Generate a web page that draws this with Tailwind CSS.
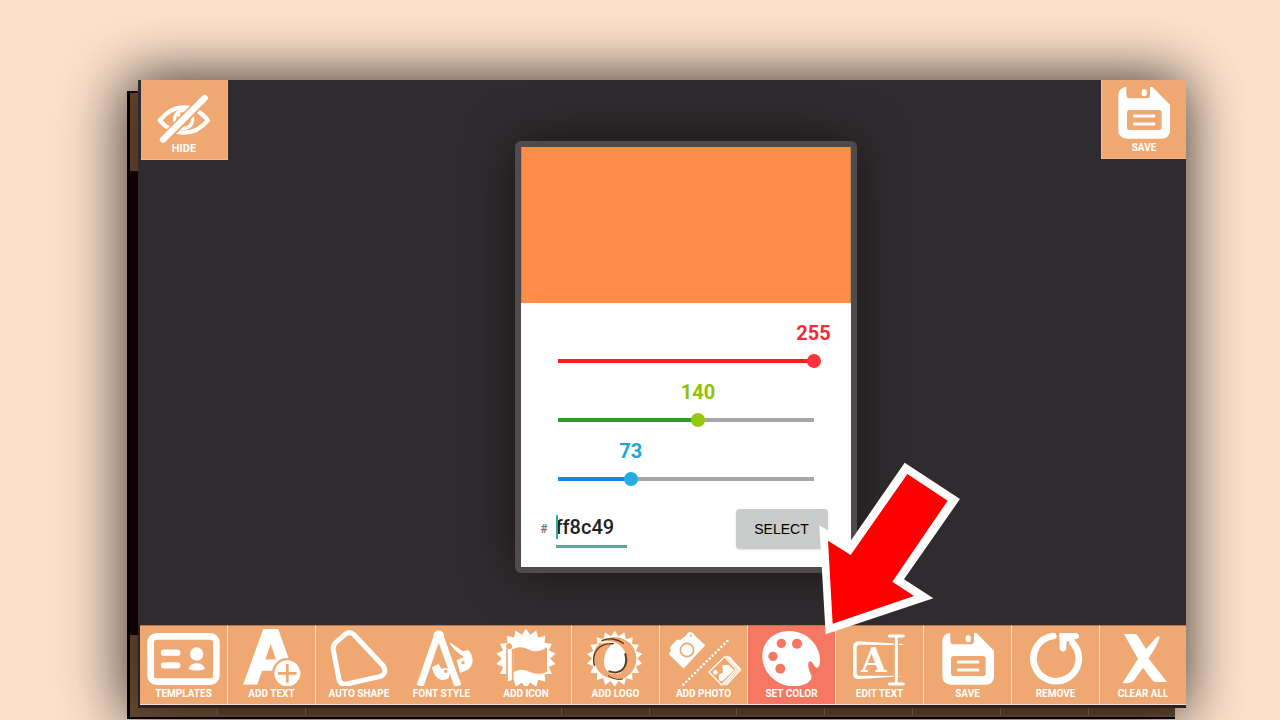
<!DOCTYPE html>
<html lang="en">
<head>
  <meta charset="UTF-8">
  <meta name="viewport" content="width=device-width, initial-scale=1.0">
  <title>Logo Editor</title>
  <script src="https://cdn.jsdelivr.net/npm/@tailwindcss/browser@4"></script>
</head>
<body class="h-screen overflow-hidden bg-[#fde1cc] pt-20 pb-3 pl-[138px] pr-[94px] font-['Roboto',sans-serif]">

  <!-- Shared shapes -->
  <svg class="absolute size-0">
    <symbol id="floppy" viewBox="282 48 264 180">
      <path fill="white" d="M361 68V92Q361 103 372 103H422Q432 103 432 92V68L440 70L492 122V200Q490 224 466 224H362Q337 222 337 198V94Q337 72 361 68Z"/>
      <rect fill="white" x="407" y="76" width="15" height="21" rx="6"/>
      <rect fill="#efa872" x="363" y="138" width="104" height="60" rx="8"/>
      <path stroke="white" stroke-width="9" stroke-linecap="round" d="M385 156H444M385 180H444"/>
    </symbol>
    <symbol id="burst" viewBox="-90 -90 180 180">
      <g fill="white">
        <circle r="72"/>
        <g id="six">
          <g id="three">
            <path id="ray" d="M-15-68L0-90L15-68Z"/>
            <use href="#ray" transform="rotate(20)"/>
            <use href="#ray" transform="rotate(40)"/>
          </g>
          <use href="#three" transform="rotate(60)"/>
        </g>
        <use href="#six" transform="rotate(120)"/>
        <use href="#six" transform="rotate(240)"/>
      </g>
    </symbol>
  </svg>

  <div class="relative h-full">

    <!-- Window behind -->
    <div class="absolute top-[11px] -left-[11px] flex h-full w-full flex-col justify-between border-l-3 border-black bg-[#170304] shadow-[-2px_-4px_60px_6px_rgba(0,0,0,0.5)]">
      <div class="mt-0.5 h-[78px] w-[87px] bg-[#6b4a30]"></div>
      <div class="mb-0.5 grid h-[82px] grid-cols-[88fr_88fr_86fr_79fr_91fr_repeat(6,88fr)_86fr] border-b-2 border-[#55504c] bg-[#5f4029]">
        <span class="border-r border-[#70665d] bg-[#6b4a30]"></span>
        <span class="border-r border-[#70665d]"></span>
        <span></span>
        <span></span>
        <span class="border-r border-[#70665d]"></span>
        <span class="border-r border-[#70665d]"></span>
        <span class="border-r border-[#70665d]"></span>
        <span class="border-r border-[#70665d]"></span>
        <span class="border-r border-[#70665d]"></span>
        <span class="border-r border-[#70665d]"></span>
        <span class="border-r border-[#70665d]"></span>
        <span></span>
      </div>
    </div>

    <!-- Editor window -->
    <div class="relative flex h-full flex-col bg-[#302b2e] text-[10px] font-bold text-white shadow-[0_0_50px_rgba(0,0,0,0.45)]">
      <div class="flex min-h-0 flex-1 items-start">
        <button class="ml-[3px] flex h-20 w-[87px] shrink-0 flex-col items-center border-r border-b border-[#f7b884] bg-[#efa872]">
          <svg class="h-[60px] w-22 shrink-0 overflow-visible" viewBox="91 60 264 180" fill="none">
            <path stroke="white" stroke-width="13" stroke-linejoin="round" d="M150 181Q182 142 222 142Q264 142 295 181Q264 218 222 218Q182 218 150 181Z"/>
            <circle stroke="white" stroke-width="10" cx="222" cy="178" r="27"/>
            <path stroke="white" stroke-width="9" d="M206 160Q208 174 222 172"/>
            <path stroke="#efa872" stroke-width="30" d="M164 236L282 118"/>
            <path stroke="white" stroke-width="19" stroke-linecap="round" d="M160 239L285 114"/>
          </svg>
          <span class="text-[11px] leading-[18px]">HIDE</span>
        </button>

        <main class="flex flex-1 justify-center pt-[61px] pl-[42px]">
          <!-- Color picker -->
          <form class="relative w-[342px] rounded-md border-6 border-[#504a4e] bg-white shadow-[0_0_50px_rgba(0,0,0,0.5)]">
            <div class="h-[156px] border-x border-[#c08a48] bg-[#ff8c49]"></div>
            <div class="flex flex-col gap-3 px-[30px] pt-[18px] text-xl">
              <div class="flex flex-col gap-[9px]">
                <div class="mx-[7px] leading-6">
                  <label for="red" class="block w-10 text-center text-[#f52c35]" style="margin-left: calc(100% - 20px)">255</label>
                </div>
                <input id="red" type="range" min="0" max="255" value="255" class="h-3.5 w-full appearance-none bg-linear-to-r from-[#f5201f] from-100% to-[#a6a6a6] to-100% bg-size-[calc(100%-14px)_4px] bg-center bg-no-repeat [&::-webkit-slider-thumb]:size-3.5 [&::-webkit-slider-thumb]:appearance-none [&::-webkit-slider-thumb]:rounded-full [&::-webkit-slider-thumb]:bg-[#fb353b]">
              </div>
              <div class="flex flex-col gap-[9px]">
                <div class="mx-[7px] leading-6">
                  <label for="green" class="block w-10 text-center text-[#8ec400]" style="margin-left: calc(54.9% - 20px)">140</label>
                </div>
                <input id="green" type="range" min="0" max="255" value="140" class="h-3.5 w-full appearance-none bg-linear-to-r from-[#2c9a2c] from-55% to-[#a6a6a6] to-55% bg-size-[calc(100%-14px)_4px] bg-center bg-no-repeat [&::-webkit-slider-thumb]:size-3.5 [&::-webkit-slider-thumb]:appearance-none [&::-webkit-slider-thumb]:rounded-full [&::-webkit-slider-thumb]:bg-[#93c90a]">
              </div>
              <div class="flex flex-col gap-[9px]">
                <div class="mx-[7px] leading-6">
                  <label for="blue" class="block w-10 text-center text-[#1ba5dc]" style="margin-left: calc(28.6% - 20px)">73</label>
                </div>
                <input id="blue" type="range" min="0" max="255" value="73" class="h-3.5 w-full appearance-none bg-linear-to-r from-[#1583f3] from-29% to-[#a6a6a6] to-29% bg-size-[calc(100%-14px)_4px] bg-center bg-no-repeat [&::-webkit-slider-thumb]:size-3.5 [&::-webkit-slider-thumb]:appearance-none [&::-webkit-slider-thumb]:rounded-full [&::-webkit-slider-thumb]:bg-[#27ace2]">
              </div>
            </div>
            <div class="mt-[23px] mb-[18px] flex items-start pr-[23px] pl-5">
              <label for="hex" class="w-[15px] pt-3 text-xs leading-4 text-[#777]">#</label>
              <div class="relative w-[71px]">
                <input id="hex" type="text" value="ff8c49" class="h-[39px] w-full border-b-3 border-[#5fa598] text-xl font-medium text-[#222]">
                <span class="absolute top-1.5 left-0 h-6 w-0.5 bg-[#2fae9c]"></span>
              </div>
              <button type="button" class="ml-auto h-10 w-[92px] rounded-sm bg-[#c9cbca] font-['Liberation_Sans',sans-serif] text-sm font-normal text-black shadow">SELECT</button>
            </div>

            <!-- Pointer to Set Color -->
            <svg class="pointer-events-none absolute top-[303px] left-[279px] z-10 h-[190px] w-[180px]" viewBox="0 0 540 570">
              <path fill="white" d="M314 38L480 147L312 388L400 445L77 553L58 226L147 280Z"/>
              <path fill="#ff0000" d="M322 72L443 152L277 395L342 438L98 521L84 272L152 315Z"/>
            </svg>
          </form>
        </main>

        <button class="flex h-[79px] w-[85px] shrink-0 flex-col items-center border-b border-l border-[#f7b884] bg-[#efa872]">
          <svg class="h-[60px] w-22 shrink-0"><use href="#floppy"/></svg>
          <span class="leading-4">SAVE</span>
        </button>
      </div>

      <!-- Toolbar -->
      <nav class="grid h-[83px] grid-cols-[88fr_88fr_86fr_79fr_91fr_repeat(6,88fr)_86fr] border-b-3 border-l-2 border-[#272229] leading-4 whitespace-nowrap *:flex *:min-w-0 *:flex-col *:items-center *:border-t *:border-b *:border-t-[#b77850] *:border-b-[#f9dcc4]">
        <button class="border-r border-r-[#fbe0ca] bg-[#efa872]">
          <svg class="h-[60px] w-22 shrink-0" viewBox="60 48 264 180">
            <rect x="92" y="79" width="197" height="136" rx="18" fill="none" stroke="white" stroke-width="20"/>
            <path stroke="white" stroke-width="19" stroke-linecap="round" d="M132 128H172M132 166H172"/>
            <circle cx="230" cy="132" r="20" fill="white"/>
            <path fill="white" d="M206 177Q210 160 230 160Q250 160 255 177Q230 186 206 177Z"/>
          </svg>
          TEMPLATES
        </button>
        <button class="border-r border-r-[#fbe0ca] bg-[#efa872]">
          <svg class="h-[60px] w-22 shrink-0" viewBox="324 48 264 180">
            <text x="452" y="220" text-anchor="middle" font-family="Liberation Sans" font-weight="bold" font-size="226" fill="white" stroke="white" stroke-width="9">A</text>
            <circle cx="502" cy="190" r="46" fill="#efa872"/>
            <circle cx="502" cy="190" r="39" fill="white"/>
            <path stroke="#efa872" stroke-width="8" d="M474 190H530M502 162V218"/>
          </svg>
          ADD TEXT
        </button>
        <button class="bg-[#efa872]">
          <svg class="h-[60px] w-22 shrink-0" viewBox="15 48 264 180">
            <path fill="none" stroke="white" stroke-width="15" stroke-linejoin="round" d="M104 74Q118 62 132 74L220 168Q232 190 212 199L110 222Q92 226 87 208L70 120Q68 108 76 99Z"/>
          </svg>
          AUTO SHAPE
        </button>
        <button class="bg-[#efa872]">
          <svg class="h-[60px] w-22 shrink-0" viewBox="262 48 264 180">
            <path fill="none" stroke="white" stroke-width="21" d="M328 228L380 78M388 78L442 228"/>
            <circle cx="384" cy="77" r="16" fill="white"/>
            <path fill="white" d="M364 172L384 161L392 177Q402 170 420 178L414 205Q395 215 380 204Q368 192 364 172Z"/>
            <path fill="white" d="M438 151L460 141L450 134Q420 112 417 96L456 124L472 120Q486 132 486 155Q482 180 448 188Z"/>
            <circle cx="405" cy="184" r="5" fill="#efa872"/>
            <circle cx="457" cy="158" r="5" fill="#efa872"/>
            <path stroke="#efa872" stroke-width="4" d="M416 118L446 200"/>
          </svg>
          FONT STYLE
        </button>
        <button class="border-r border-r-[#fbe0ca] bg-[#efa872]">
          <svg class="h-[60px] w-22 shrink-0" viewBox="8 48 264 180">
            <use href="#burst" x="50" y="56" width="180" height="180"/>
            <path fill="#efa872" d="M40 194H82V226H40Z"/>
            <path fill="#efa872" d="M102 117Q122 106 150 119Q175 131 203 112V185Q180 198 150 185Q122 172 102 187Z"/>
            <path fill="none" stroke="#efa872" stroke-width="5" d="M83 226V117M100 212V117"/>
            <circle cx="89" cy="109" r="9" fill="#efa872"/>
          </svg>
          ADD ICON
        </button>
        <button class="border-r border-r-[#fbe0ca] bg-[#efa872]">
          <svg class="h-[60px] w-22 shrink-0" viewBox="276 48 264 180">
            <use href="#burst" x="320" y="62" width="168" height="168"/>
            <circle cx="404" cy="146" r="65" fill="#efa872"/>
            <path fill="white" d="M402 101C424 104 438 130 438 156C438 178 424 192 405 192C386 192 372 178 372 156C372 130 384 108 402 101Z"/>
            <g fill="none" stroke-linecap="round">
              <path stroke="white" stroke-width="5" d="M364 98C400 88 436 108 438 150M345 168C352 194 380 210 412 209"/>
              <path stroke="#5c3a17" stroke-width="4" d="M343 166C334 130 355 98 400 101"/>
              <path stroke="#5c3a17" stroke-width="4" d="M366 92C384 82 412 86 430 100"/>
              <path stroke="#5c3a17" stroke-width="6" d="M436 132C446 170 424 196 388 184"/>
              <path stroke="#5c3a17" stroke-width="3" d="M385 197C400 208 416 210 428 207"/>
            </g>
          </svg>
          ADD LOGO
        </button>
        <button class="border-r border-r-[#fbe0ca] bg-[#efa872]">
          <svg class="h-[60px] w-22 shrink-0" viewBox="15 48 264 180">
            <path fill="white" stroke="white" stroke-width="4" stroke-linejoin="round" d="M44 132L50 122L47 112L66 91L78 91L94 78L100 70Q108 65 114 72L118 78L148 106L86 173Z"/>
            <circle cx="96" cy="120" r="20" fill="none" stroke="#efa872" stroke-width="5"/>
            <circle cx="108" cy="77" r="3" fill="#efa872"/>
            <path stroke="white" stroke-width="8" stroke-linecap="round" stroke-dasharray="0 12.400" d="M85 224L218 92"/>
            <g fill="none" stroke="white" stroke-width="4" stroke-linejoin="round">
              <path d="M162 186L209 140L244 178L200 225Z"/>
              <path d="M214 138L251 178L206 226M221 139L257 179L214 225"/>
            </g>
            <circle cx="181" cy="187" r="7" fill="white"/>
            <path fill="white" d="M193 212L191 194L204 188L202 166L220 164L237 180L202 214Z"/>
          </svg>
          ADD PHOTO
        </button>
        <button class="border-r border-r-[#fbe0ca] bg-[#f67862]">
          <svg class="h-[60px] w-22 shrink-0" viewBox="279 48 264 180">
            <path fill="white" d="M404 63C455 64 495 105 495 150C495 166 490 176 484 173C476 168 472 153 464 154C456 158 460 180 469 196C474 220 440 229 415 229C365 228 322 188 322 138C322 95 358 62 404 63Z"/>
            <g fill="#f67862">
              <circle cx="379" cy="100" r="14"/>
              <circle cx="426" cy="101" r="15"/>
              <circle cx="354" cy="139" r="14"/>
              <circle cx="376" cy="176" r="15"/>
            </g>
          </svg>
          SET COLOR
        </button>
        <button class="border-r border-r-[#fbe0ca] bg-[#efa872]">
          <svg class="h-[60px] w-22 shrink-0" viewBox="18 48 264 180">
            <path fill="white" d="M220 102L88 94Q69 94 69 112V192Q69 208 88 207L220 199L195 197L92 197Q80 199 80 188V114Q80 104 92 104L220 105Z"/>
            <path fill="none" stroke="#efa872" stroke-width="17" d="M199 84V216"/>
            <path fill="none" stroke="white" stroke-width="9" stroke-linecap="round" d="M199 78V222M178 78H220M178 222H220"/>
            <text x="131" y="187" text-anchor="middle" font-family="DejaVu Serif" font-weight="bold" font-size="98" fill="white">A</text>
          </svg>
          EDIT TEXT
        </button>
        <button class="border-r border-r-[#fbe0ca] bg-[#efa872]">
          <svg class="h-[60px] w-22 shrink-0"><use href="#floppy"/></svg>
          SAVE
        </button>
        <button class="border-r border-r-[#fbe0ca] bg-[#efa872]">
          <svg class="h-[60px] w-22 shrink-0" viewBox="21 48 264 180">
            <path fill="none" stroke="white" stroke-width="20" stroke-linecap="round" d="M145 78A68 68 0 1 0 203 99"/>
            <path fill="white" d="M163 69H214Q226 74 221 84L198 93L184 96V118Q174 132 164 118Z"/>
          </svg>
          REMOVE
        </button>
        <button class="bg-[#efa872]">
          <svg class="h-[60px] w-22 shrink-0" viewBox="282 48 264 180">
            <path fill="white" d="M357 72H388Q395 72 399 79L423 117L456 80Q463 76 464 83Q454 112 430 145L486 216H452Q446 216 442 211L414 173L386 213Q381 220 352 220L399 147Z"/>
          </svg>
          CLEAR ALL
        </button>
      </nav>
    </div>
  </div>
</body>
</html>
